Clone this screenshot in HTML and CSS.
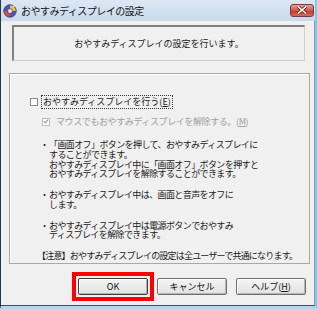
FILE: index.html
```html
<!DOCTYPE html>
<html>
<head>
  <title>おやすみディスプレイの設定</title>
  <link rel="stylesheet" href="styles.css">
</head>
<body>
<div class="window">

  <!-- title bar -->
  <div class="titlebar">
    <svg class="app-icon" width="14" height="14" viewBox="0 0 14 14">
      <circle cx="7" cy="7" r="6.2" fill="#5b4fb8" stroke="#2c2c6c" stroke-width="0.8"/>
      <path d="M7 1.2 A5.8 5.8 0 0 1 12.8 7 L7 7 Z" fill="#f2c230"/>
      <path d="M1.2 7 A5.8 5.8 0 0 0 7 12.8 L7 7 Z" fill="#e0483a"/>
      <circle cx="7" cy="7" r="2.4" fill="#d8e8ff" stroke="#334" stroke-width="0.6"/>
      <path d="M9.5 3 L12 1.5" stroke="#fff" stroke-width="1"/>
    </svg>
    <span class="title">おやすみディスプレイの設定</span>
    <span class="close-btn">
      <svg width="10" height="8" viewBox="0 0 10 8">
        <path d="M1 0.5 L9 7.5 M9 0.5 L1 7.5" stroke="#5a1a1a" stroke-width="3"/>
        <path d="M1 0.5 L9 7.5 M9 0.5 L1 7.5" stroke="#fff" stroke-width="1.6"/>
      </svg>
    </span>
  </div>

  <div class="client">
    <div class="intro">おやすみディスプレイの設定を行います。</div>

    <div class="group">
      <div class="check">
        <span class="box"></span>
        <span class="check-label focus">おやすみディスプレイを行う(<u>E</u>)</span>
      </div>
      <div class="check sub disabled">
        <span class="box checked">
          <svg width="7" height="7" viewBox="0 0 7 7">
            <path d="M1 3.3 L2.8 5.2 L6 1.4" fill="none" stroke="#9a9a9a" stroke-width="1.3"/>
          </svg>
        </span>
        <span class="check-label">マウスでもおやすみディスプレイを解除する。(<u>M</u>)</span>
      </div>

      <ul class="notes">
        <li>「画面オフ」ボタンを押して、おやすみディスプレイに<br>することができます。<br>おやすみディスプレイ中に「画面オフ」ボタンを押すと<br>おやすみディスプレイを解除することができます。</li>
        <li>おやすみディスプレイ中は、画面と音声をオフに<br>します。</li>
        <li>おやすみディスプレイ中は電源ボタンでおやすみ<br>ディスプレイを解除できます。</li>
      </ul>

      <p class="caution">【注意】おやすみディスプレイの設定は全ユーザーで共通になります。</p>
    </div>

    <div class="buttons">
      <span class="highlight"><button class="btn default">OK</button></span>
      <button class="btn">キャンセル</button>
      <button class="btn">ヘルプ(<u>H</u>)</button>
    </div>
  </div>
</div>
</body>
</html>
```

FILE: styles.css
```css
body {
  margin: 0;
  font-family: "Noto Sans CJK JP", "Liberation Sans", sans-serif;
  font-size: 9px;
  color: #1a1a1a;
  background-color: #fff;
}

.window {
  width: 317px;
  height: 309px;
  box-sizing: border-box;
  display: flex;
  flex-direction: column;
  background-color: #bcd6ee;
  border-left: 1px solid #24364a;
  border-right: 2px solid #8cc4e8;
  border-bottom: 3px solid #b8d4ee;
}

.titlebar {
  height: 21px;
  flex: none;
  display: flex;
  align-items: center;
  padding-left: 2px;
  background: linear-gradient(#dce7f4, #c9d9ec);
}

.app-icon {
  flex: none;
}

.title {
  margin-left: 4px;
  font-size: 10px;
  letter-spacing: -0.5px;
  color: #111;
  flex: 1;
}

.close-btn {
  width: 24px;
  height: 13px;
  margin-right: 1px;
  margin-top: -1px;
  display: flex;
  align-items: center;
  justify-content: center;
  border: 1px solid #7a3a3a;
  border-radius: 3px;
  box-sizing: border-box;
  background: linear-gradient(#e8a090, #d0584a 50%, #c0382c 51%, #d86a50);
}

.client {
  flex: 1;
  display: flex;
  flex-direction: column;
  background-color: #f0f0f0;
  border-right: 1px solid #8a9aaa;
  border-bottom: 1px solid #3c4e62;
}

.intro {
  height: 36px;
  margin: 4px 9px 0 11px;
  box-sizing: border-box;
  display: flex;
  align-items: center;
  justify-content: center;
  border-top: 2px solid #808080;
  border-left: 2px solid #808080;
  border-right: 1px solid #cfcfcf;
  border-bottom: 1px solid #cfcfcf;
  background-color: #f0f0f0;
}

.group {
  height: 191px;
  margin: 12px 4px 0 8px;
  box-sizing: border-box;
  padding: 21px 6px 0 20px;
  border: 1px solid #a8a8a8;
  box-shadow: inset 1px 1px #fff;
}

.check {
  display: flex;
  align-items: center;
  height: 13px;
}

.check.sub {
  margin-top: 7px;
  margin-left: 12px;
}

.box {
  flex: none;
  width: 8px;
  height: 8px;
  box-sizing: border-box;
  border: 1px solid #8a8a8a;
  background-color: #fff;
  display: flex;
  align-items: center;
  justify-content: center;
  margin-right: 5px;
}

.disabled .box {
  border-color: #bcbcbc;
  margin-right: 6px;
}

.disabled .check-label {
  color: #a0a0a0;
  letter-spacing: -0.4px;
}

.check-label.focus {
  outline: 1px dotted #333;
  padding: 0 1px;
  margin-left: -1px;
  line-height: 12px;
}

.notes {
  list-style: none;
  margin: 12px 0 0 0;
  padding: 0 0 0 13px;
  line-height: 9.75px;
  letter-spacing: -0.6px;
}

.notes li {
  position: relative;
  padding-left: 6px;
  margin-bottom: 11px;
}

.notes li::before {
  content: "・";
  position: absolute;
  left: -3px;
}

.caution {
  margin: 11px 0 0 7px;
  line-height: 10px;
  letter-spacing: -0.8px;
}

.buttons {
  display: flex;
  justify-content: flex-end;
  gap: 9px;
  margin-top: 14px;
  padding-right: 8px;
}

.highlight {
  display: flex;
  border: 4px solid #f00;
  padding: 2px;
  margin: -6px;
}

.btn {
  width: 70px;
  height: 17px;
  padding: 0;
  font-family: inherit;
  font-size: 9px;
  color: #111;
  border: 1px solid #707070;
  border-radius: 2px;
  background: linear-gradient(#f4f4f4, #e2e2e2);
  box-shadow: inset 1px 1px #fff, inset -1px -1px #b4b4b4;
}

.btn.default {
  border-color: #3c3c3c;
}
```
